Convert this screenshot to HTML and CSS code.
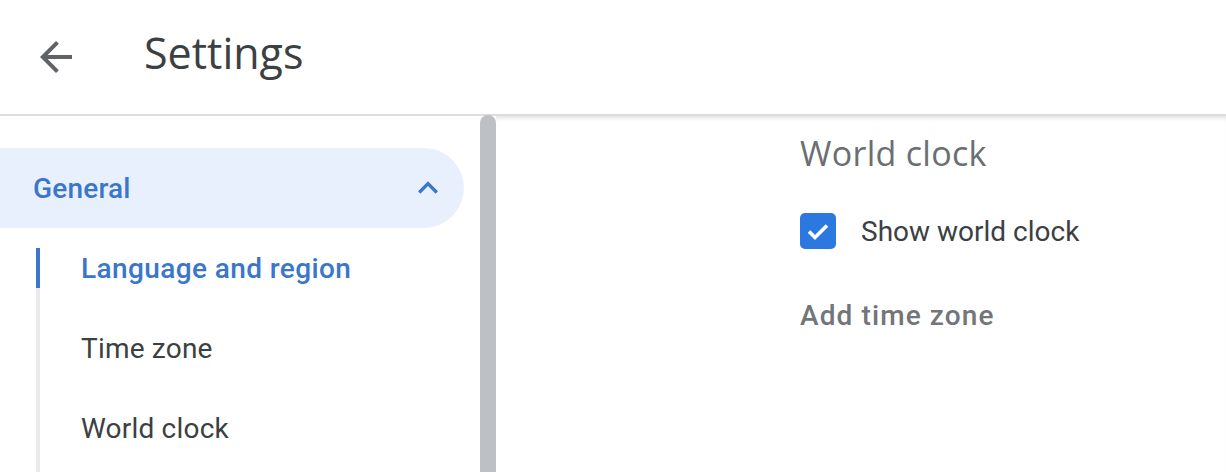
FILE: index.html
```html
<!DOCTYPE html>
<html>
<head>
<meta charset="utf-8">
<link rel="stylesheet" href="styles.css">
</head>
<body>
<header class="topbar">
  <button class="back" aria-label="Back">
    <svg width="48" height="48" viewBox="0 0 24 24"><path fill="#5f6368" d="M20 11H7.83l5.59-5.59L12 4l-8 8 8 8 1.41-1.41L7.83 13H20v-2z"/></svg>
  </button>
  <h1 class="title">Settings</h1>
</header>
<div class="body">
  <nav class="sidebar">
    <div class="group">
      <span class="group-label">General</span>
      <svg class="chev" width="40" height="40" viewBox="0 0 24 24"><path fill="#3a76cc" d="M12 8l-6 6 1.41 1.41L12 10.83l4.59 4.58L18 14z"/></svg>
    </div>
    <ul class="sublist">
      <li class="item active">Language and region</li>
      <li class="item">Time zone</li>
      <li class="item">World clock</li>
    </ul>
  </nav>
  <div class="scrollbar"><div class="thumb"></div></div>
  <main class="main">
    <h2 class="section-title">World clock</h2>
    <label class="check-row">
      <span class="checkbox">
        <svg width="36" height="36" viewBox="0 0 36 36"><path d="M9 18.5l6 6 12-12" fill="none" stroke="#fff" stroke-width="3.6"/></svg>
      </span>
      <span class="check-label">Show world clock</span>
    </label>
    <div class="add">Add time zone</div>
  </main>
</div>
</body>
</html>
```
FILE: styles.css
```css
* { box-sizing: border-box; }
html, body { margin: 0; padding: 0; background: #fff; overflow: hidden; }
body { font-family: Roboto, "Noto Sans", sans-serif; color: #3c4043; width: 1226px; height: 472px; }

.topbar {
  height: 116px;
  border-bottom: 2px solid #dadce0;
  display: flex;
  align-items: center;
  padding-left: 32px;
}
.back {
  width: 48px; height: 48px; padding: 0; border: 0; background: none;
  display: flex;
}
.title {
  margin: 0 0 0 64px;
  font-family: "Open Sans", sans-serif;
  font-weight: 400;
  font-size: 43px;
  color: #3c4043;
  position: relative; top: -5px;
}

.body {
  display: grid;
  grid-template-columns: 480px 16px 1fr;
  height: 356px;
}

.sidebar { padding-top: 32px; display: flex; flex-direction: column; }
.group {
  width: 464px; height: 80px; flex: none;
  background: #e8f0fe;
  border-radius: 0 40px 40px 0;
  display: flex; align-items: center; justify-content: space-between;
  padding: 0 16px 0 33px;
}
.group-label { font-size: 28px; font-weight: 500; color: #3a76cc; letter-spacing: 0.2px; }

.sublist {
  list-style: none; margin: 20px 0 0 36px; padding: 0;
  border-left: 4px solid #e8eaed;
  flex: 1;
}
.item {
  height: 80px; display: flex; align-items: center;
  padding-left: 41px; font-size: 28px; color: #3c4043;
  letter-spacing: 0.2px;
  position: relative;
}
.item:first-child { margin-top: -20px; }
.item.active { color: #3a76cc; font-weight: 500; letter-spacing: 0.4px; }
.item.active::before {
  content: ""; position: absolute; left: -4px; top: 20px;
  width: 4px; height: 40px; background: #3a76cc;
}

.scrollbar { margin-top: -1px; }
.thumb { width: 16px; height: 100%; background: #bdc1c6; border-radius: 8px 8px 0 0; }

.main {
  padding: 19px 0 0 304px;
  box-shadow: inset 0 5px 4px -3px rgba(0,0,0,0.12);
}
.section-title {
  margin: 0; font-family: "Open Sans", sans-serif; font-weight: 400;
  font-size: 34px; letter-spacing: 0.3px; color: #6b6e72; line-height: 36px;
}
.check-row { display: flex; align-items: center; margin-top: 42px; gap: 25px; }
.checkbox {
  width: 36px; height: 36px; border-radius: 5px; background: #2b78e0;
  display: flex;
}
.check-label { font-size: 28px; color: #3c4043; }
.add {
  margin-top: 50px; font-size: 28px; font-weight: 500; color: #727579;
  letter-spacing: 1.1px;
}
```
